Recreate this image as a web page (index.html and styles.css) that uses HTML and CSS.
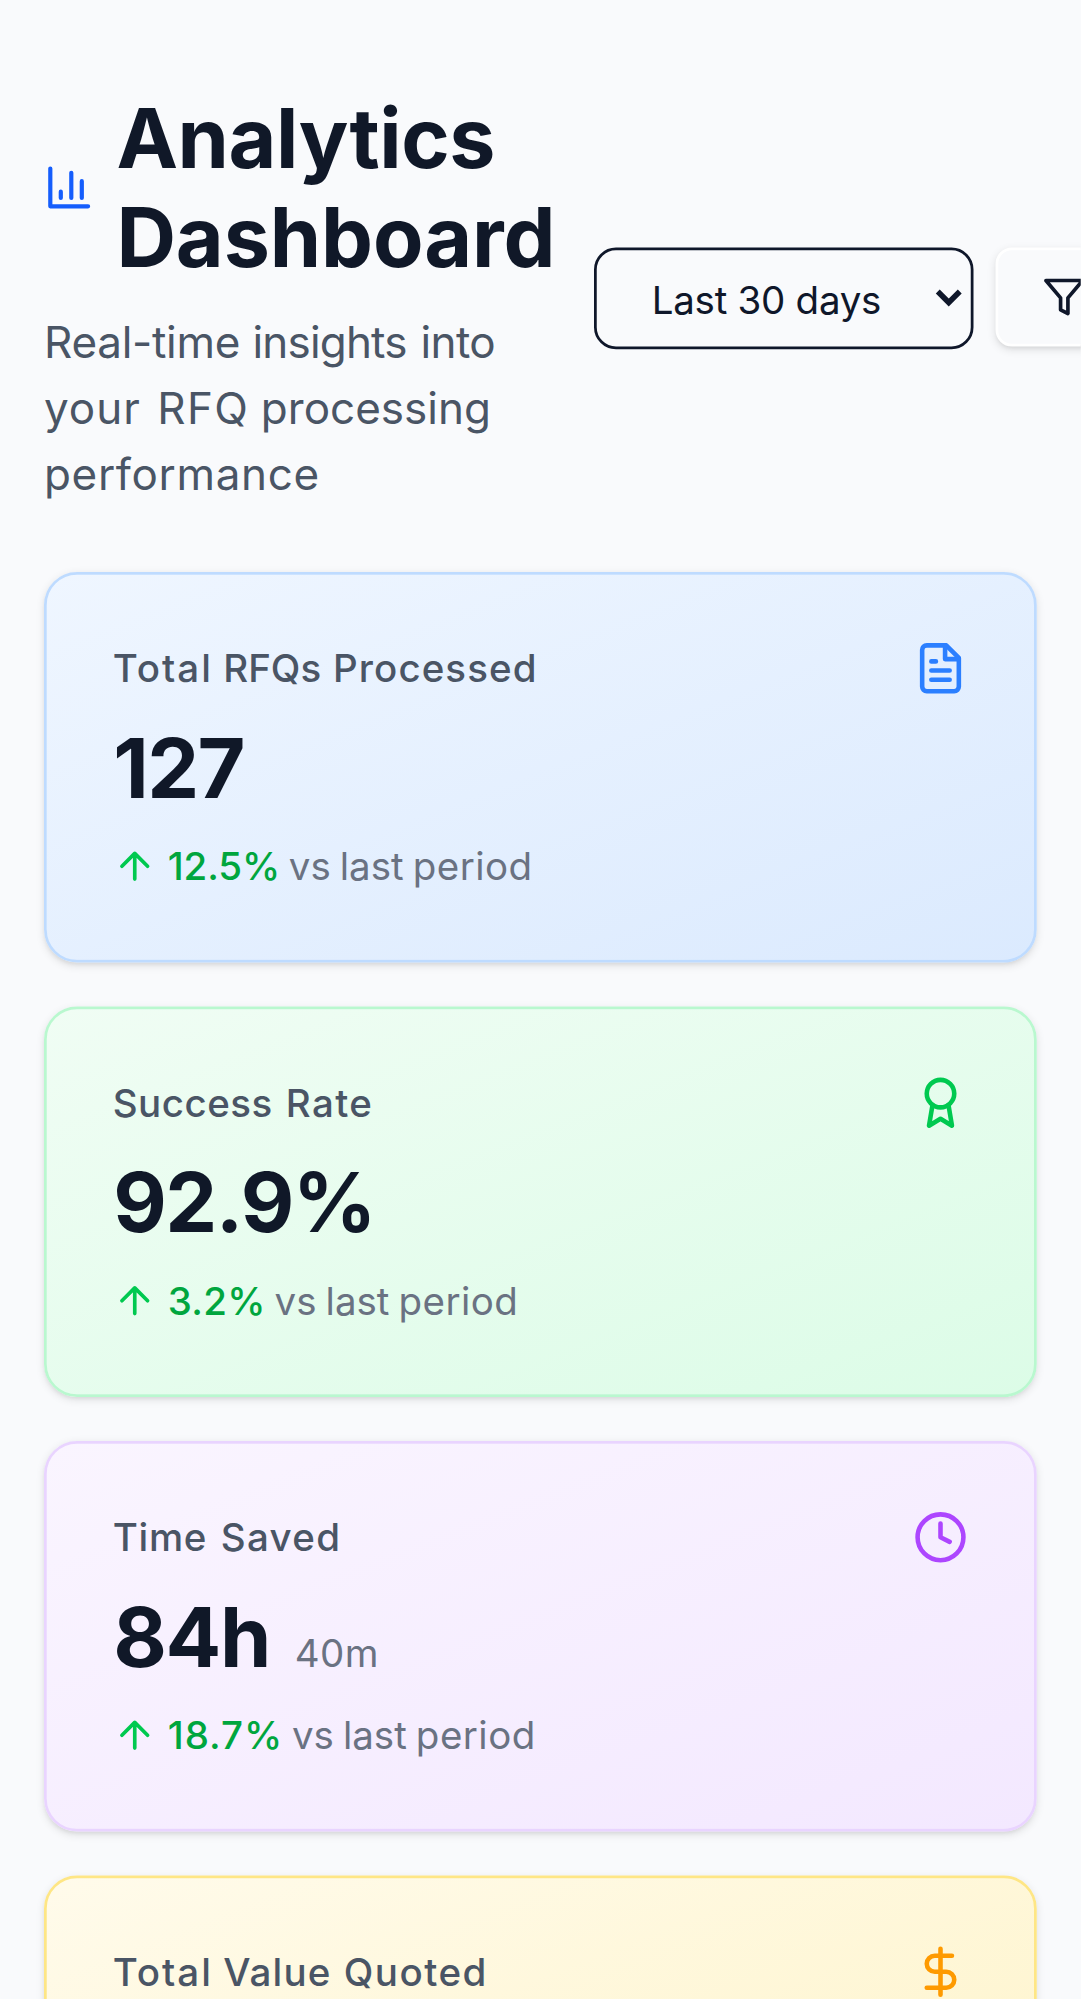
FILE: index.html
```html
<!DOCTYPE html>
<html lang="en">
<head>
<meta charset="utf-8">
<title>Analytics Dashboard</title>
<link rel="stylesheet" href="styles.css">
</head>
<body>
<main class="page">
  <header class="header">
    <div class="intro">
      <h1 class="title">
        <svg class="title-icon" viewBox="0 0 24 24"><path d="M3 3v18h18M18 17V9M13 17V5M8 17v-3"/></svg>
        <span class="title-text"><span class="w-analytics">Analytics</span> Dashboard</span>
      </h1>
      <p class="subtitle"><span class="w-realtime">Real-time</span> <span class="w-insights">insights</span> <span class="w-into">into</span> <span class="w-your">your</span> <span class="w-rfq">RFQ</span> processing <span class="w-performance">performance</span></p>
    </div>
    <div class="actions">
      <select class="range"><option>Last 30 days</option><option>Last 7 days</option><option>Last 90 days</option></select>
      <button class="filter" aria-label="Filter"><svg class="icon-sm" viewBox="0 0 24 24"><path d="M22 3H2l8 9.46V19l4 2v-8.54z"/></svg></button>
    </div>
  </header>

  <section class="cards">
    <article class="card blue">
      <div class="card-body">
        <p class="label"><span class="w-total">Total</span> <span class="w-rfqs">RFQs</span> <span class="w-processed">Processed</span></p>
        <p class="value v-count">127</p>
        <p class="trend"><svg class="icon-sm arrow" viewBox="0 0 24 24"><path d="m5 12 7-7 7 7M12 19V5"/></svg><span class="pct p-count">12.5%</span><span class="note">vs last <span class="w-period">period</span></span></p>
      </div>
      <svg class="icon" viewBox="0 0 24 24"><path d="M14.5 2H6a2 2 0 0 0-2 2v16a2 2 0 0 0 2 2h12a2 2 0 0 0 2-2V7.5L14.5 2z"/><path d="M14 2v6h6M10 9H8M16 13H8M16 17H8"/></svg>
    </article>
    <article class="card green">
      <div class="card-body">
        <p class="label"><span class="w-success">Success</span> <span class="w-rate">Rate</span></p>
        <p class="value v-rate">92.9%</p>
        <p class="trend"><svg class="icon-sm arrow" viewBox="0 0 24 24"><path d="m5 12 7-7 7 7M12 19V5"/></svg><span class="pct p-rate">3.2%</span><span class="note">vs last <span class="w-period">period</span></span></p>
      </div>
      <svg class="icon" viewBox="0 0 24 24"><circle cx="12" cy="8" r="6"/><path d="M15.477 12.89 17 22l-5-3-5 3 1.523-9.11"/></svg>
    </article>
    <article class="card purple">
      <div class="card-body">
        <p class="label"><span class="w-time">Time</span> <span class="w-saved">Saved</span></p>
        <p class="value v-time">84h <span class="minutes">40m</span></p>
        <p class="trend"><svg class="icon-sm arrow" viewBox="0 0 24 24"><path d="m5 12 7-7 7 7M12 19V5"/></svg><span class="pct p-time">18.7%</span><span class="note">vs last <span class="w-period">period</span></span></p>
      </div>
      <svg class="icon" viewBox="0 0 24 24"><circle cx="12" cy="12" r="10"/><path d="M12 6v6l4 2"/></svg>
    </article>
    <article class="card amber">
      <div class="card-body">
        <p class="label"><span class="w-total">Total</span> <span class="w-value">Value</span> <span class="w-quoted">Quoted</span></p>
      </div>
      <svg class="icon" viewBox="0 0 24 24"><path d="M12 2v20M17 5H9.5a3.5 3.5 0 0 0 0 7h5a3.5 3.5 0 0 1 0 7H6"/></svg>
    </article>
  </section>
</main>
</body>
</html>
```
FILE: styles.css
```css
* { box-sizing: border-box; margin: 0; padding: 0; }
html, body { height: 100%; overflow: hidden; }
body { background: #f9fafc; font-family: Inter, "Liberation Sans", sans-serif; color: #0f172a; }

/* The mobile layout is 393px wide and enlarged for display. */
.page {
  width: 393px;
  height: 727px;
  padding: 32px 16px 0;
  overflow: hidden;
  transform: scale(2.75);
  transform-origin: 0 0;
}

svg { display: block; flex: none; fill: none; stroke: currentColor; stroke-width: 2; stroke-linecap: round; stroke-linejoin: round; }

.header { display: flex; align-items: center; gap: 16px; width: 420px; margin-bottom: 24px; }
.intro { width: 184px; flex: none; }
.title { display: flex; align-items: center; gap: 8px; font-size: 30px; line-height: 36px; font-weight: 700; letter-spacing: -.04px; color: #101828; }
.title-icon { width: 18.33px; height: 18.33px; margin-bottom: .4px; color: #155dfc; }
.title-text { width: 157px; }
.subtitle { margin-top: 8px; font-size: 16px; line-height: 24px; color: #4a5565; }

.actions { display: flex; align-items: center; gap: 8px; }
.range {
  width: 138px;
  height: 37px;
  padding: 8px 16px;
  border: 1px solid #0f172a;
  border-radius: 8px;
  background: transparent;
  color: #0f172a;
  font: 14px/20px Inter, sans-serif;
  letter-spacing: -.1px;
}
.filter {
  flex: none;
  height: 36px;
  padding: 0 16px;
  border: 1px solid #fff;
  border-radius: 6px;
  background: #f9fafc;
  color: #0f172a;
  box-shadow: 0 1px 3px rgba(0, 0, 0, .1), 0 1px 2px -1px rgba(0, 0, 0, .1);
}
.icon-sm { width: 16px; height: 16px; }

.cards { display: grid; gap: 16px; }
.card {
  display: flex;
  justify-content: space-between;
  height: 142px;
  padding: 24px;
  border: 1px solid;
  border-radius: 12px;
  box-shadow: 0 1px 3px rgba(0, 0, 0, .1), 0 1px 2px -1px rgba(0, 0, 0, .1);
}
.blue { background: linear-gradient(to bottom right, #eff6ff, #dbeafe); border-color: #bedbff; }
.green { background: linear-gradient(to bottom right, #f0fdf4, #dcfce7); border-color: #b9f8cf; }
.purple { background: linear-gradient(to bottom right, #faf5ff, #f3e8ff); border-color: #e9d4ff; }
.amber { background: linear-gradient(to bottom right, #fffbeb, #fef3c6); border-color: #fee685; }

.icon { width: 20px; height: 20px; }
.blue .icon { color: #2b7fff; }
.green .icon { color: #00c950; }
.purple .icon { color: #ad46ff; }
.amber .icon { color: #fe9a00; }

.label { font-size: 14px; line-height: 20px; font-weight: 500; color: #4a5565; }
.value { height: 36px; margin-top: 8px; padding-left: .2px; font-size: 30px; line-height: 36px; font-weight: 700; color: #101828; }
.minutes { margin-left: 2.4px; font-size: 14px; line-height: 20px; font-weight: 400; letter-spacing: .15px; color: #6a7282; }
.trend { display: flex; align-items: center; margin-top: 8px; font-size: 14px; line-height: 20px; }
.arrow { margin-right: 4px; color: #00c950; }
.pct { font-weight: 500; color: #00a63e; }
.note { margin-left: 3.2px; word-spacing: -.65px; color: #6a7282; }

/* Tracking of the figures */
.v-count { letter-spacing: -.6px; }
.v-rate { letter-spacing: -.55px; }
.v-time { letter-spacing: -.5px; }
.p-count { letter-spacing: -.05px; }
.p-rate { letter-spacing: .1px; }
.p-time { letter-spacing: .35px; }

/* Tracking of single words */
.w-analytics { letter-spacing: -.15px; }
.w-realtime { letter-spacing: -.1px; }
.w-insights { letter-spacing: -.3px; margin-right: .5px; }
.w-into { letter-spacing: -.2px; }
.w-your { letter-spacing: .35px; margin-right: 1.5px; }
.w-rfq { letter-spacing: .5px; margin-right: -.3px; }
.w-performance { letter-spacing: .24px; }
.w-total { letter-spacing: .72px; }
.w-rfqs { margin-right: .6px; }
.w-processed { letter-spacing: .39px; }
.w-success { letter-spacing: .18px; margin-right: 1px; }
.w-rate { letter-spacing: .5px; }
.w-time { letter-spacing: .25px; margin-right: 1.2px; }
.w-saved { letter-spacing: .5px; }
.w-value { letter-spacing: .42px; margin-right: .7px; }
.w-quoted { letter-spacing: .54px; }
.w-period { letter-spacing: .17px; }
```
